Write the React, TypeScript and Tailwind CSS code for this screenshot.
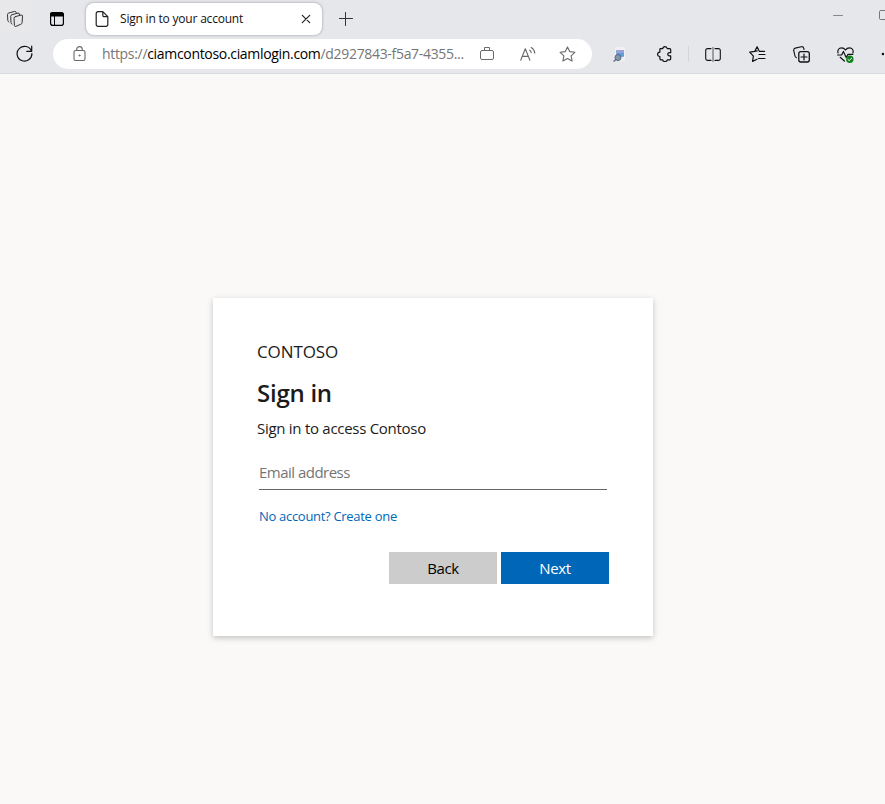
import React from "react";

type IconProps = {
  w: number;
  h: number;
  className?: string;
  children: React.ReactNode;
};

function Icon({ w, h, className = "", children }: IconProps) {
  return (
    <svg
      width={w}
      height={h}
      viewBox={`0 0 ${w} ${h}`}
      fill="none"
      stroke="currentColor"
      strokeLinecap="round"
      strokeLinejoin="round"
      className={`shrink-0 ${className}`}
    >
      {children}
    </svg>
  );
}

function TabStrip() {
  return (
    <div className="flex h-[38px] items-start">
      <div className="flex h-[33px] w-[33px] shrink-0 bg-[#e8e8ea] pl-[6px] pt-[10px] text-[#333]">
        <Icon w={18} h={18}>
          <path d="M9.4 6.6 15.2 5.1Q16.6 4.8 16.5 6.1L16.1 12.7Q16 13.9 14.8 14.3L9.8 16.4Q8.6 16.7 8.4 15.4L8 8.1Q8 6.9 9.4 6.6Z" />
          <path d="M13.4 4.8V4Q13.3 2.9 12 3.1L6 4.7Q4.7 5 4.7 6.3L5 12.6Q5.1 13.8 6 14.1" />
          <path d="M10.1 2.8V2.4Q9.9 1.1 8.6 1.4L2.8 3Q1.5 3.3 1.5 4.6L1.8 10.4Q1.9 11.6 2.8 12" />
        </Icon>
      </div>
      <Icon w={14} h={14} className="ml-[17px] mt-3 text-black">
        <rect x="0.6" y="0.6" width="12.8" height="12.8" rx="2.2" strokeWidth="1.2" />
        <path d="M1 1h12v3H1z" fill="currentColor" />
        <path d="M4.5 4v9" />
      </Icon>
      <div className="ml-[22px] mt-[3px] flex h-8 w-[236px] shrink-0 items-center rounded-lg bg-white pl-[9px] shadow-[0_0_3px_rgba(0,0,0,0.35)]">
        <Icon w={14} h={16} className="text-[#222]">
          <path d="M3 .7h4.8l5 5v7.8a1.8 1.8 0 0 1-1.8 1.8H3a1.8 1.8 0 0 1-1.8-1.8v-11A1.8 1.8 0 0 1 3 .7ZM7.8.9v3.6a1.2 1.2 0 0 0 1.2 1.2h3.6" strokeWidth="1.2" />
        </Icon>
        <span className="ml-[11px] w-[180px] whitespace-nowrap text-[12px] leading-4 tracking-[-0.2px] text-[#111]">
          Sign in to your account
        </span>
        <Icon w={10} h={10} className="ml-px text-[#222]">
          <path d="m1.3 1.3 7.4 7.4M8.7 1.3 1.3 8.7" strokeWidth="1.2" />
        </Icon>
      </div>
      <Icon w={14} h={14} className="ml-[17px] mt-3 text-[#333]">
        <path d="M6.5.5v13M0 6.5h13.5" />
      </Icon>
      <Icon w={11} h={11} className="ml-[480px] mt-[10px] text-[#888]">
        <path d="M.5 5.5h9" />
      </Icon>
      <Icon w={10} h={10} className="ml-[35px] mt-[10px] text-[#777]">
        <rect x="0.5" y="0.5" width="9" height="9" rx="1" />
      </Icon>
    </div>
  );
}

function AddressBar() {
  return (
    <div className="ml-[20px] flex h-[30px] w-[539px] shrink-0 items-center rounded-full bg-white pl-[19.5px] text-[#6a6a6a]">
      <Icon w={13} h={15} className="-translate-y-px">
        <rect x="1" y="4.5" width="11" height="10" rx="1.5" strokeWidth="1.1" />
        <path d="M3.7 4.5V3.4a2.8 2.8 0 0 1 5.6 0v1.1" strokeWidth="1.1" />
        <circle cx="6.5" cy="9.5" r=".7" fill="currentColor" strokeWidth=".5" />
      </Icon>
      <span className="ml-[16.5px] w-[378px] whitespace-nowrap text-[14px] leading-5 tracking-[-0.32px] text-[#767676]">
        https://<span className="text-black">ciamcontoso.ciamlogin.com</span>/d2927843-f5a7-4355...
      </span>
      <Icon w={14} h={13} className="-translate-y-px">
        <rect x="0.5" y="3.5" width="13" height="9" rx="1.5" />
        <path d="M4.5 3.5V.5h5v3" />
      </Icon>
      <Icon w={16} h={14} className="ml-[26px]">
        <path d="m.7 13.3 4.6-11.6 4.6 11.6M2.3 9.4h6" strokeWidth="1.1" />
        <path d="M9.7 3.2q1.4.9 1.6 2.6M11.2.6q3.2 1.6 3.6 5.6" strokeWidth="1.1" />
      </Icon>
      <Icon w={17} h={16} className="ml-[22.5px]">
        <path d="m8.5 .9 2.2 4.7 5.2.7-3.8 3.5 1 5.2-4.6-2.5-4.6 2.5 1-5.2L1.1 6.3l5.2-.7Z" strokeWidth="1.1" />
      </Icon>
    </div>
  );
}

function Toolbar() {
  return (
    <div className="flex h-9 items-start border-b border-[#d9dcdd] pt-px text-[#111]">
      <Icon w={17} h={17} className="ml-4 mt-[6px]">
        <path d="M15.5 6.3A7.4 7.4 0 1 0 15.9 8.5M15.7 1.2v5.1h-5" strokeWidth="1.2" />
      </Icon>
      <AddressBar />
      <svg width="13" height="16" viewBox="0 0 13 16" className="ml-[21px] mt-2 shrink-0">
        <path d="M2 0h8l2 2v12H2z" fill="#f2f0f2" />
        <path d="M3 3h8v7H3z" fill="#8ba7dc" />
        <path d="M5 3h6v3H5z" fill="#9aa0d6" />
        <path d="M4 6h7v3H4z" fill="#5c9fdc" />
        <circle cx="5" cy="10.5" r="3" fill="#8496aa" stroke="#526980" />
        <path d="m3 12.5-2.5 2" stroke="#526980" strokeWidth="1.5" />
      </svg>
      <Icon w={15} h={16} className="ml-[30.5px] mt-[7px]">
        <path
          d="M3.2 2.7h2.5C5.9 1.1 6.7.6 8 .6s2.1.5 2.3 2.1h2.4a1 1 0 0 1 1 1v3C12 6.4 10.8 7 10.8 8.3S12 10 13.7 9.8v3a1 1 0 0 1-1 1h-2.4c-.2 1.2-1 1.7-2.3 1.7s-2.1-.5-2.3-1.7H3.9a1 1 0 0 1-1-1v-2.3C1.4 10.5.6 9.7.6 8.3s.8-2.1 2.3-2.2V3Z"
          strokeWidth="1.2"
        />
      </Icon>
      <div className="ml-[16.5px] mt-[7px] h-4 w-px shrink-0 bg-[#d3d5d8]" />
      <Icon w={16} h={15} className="ml-4 mt-2">
        <path d="M6 1.6H2.5A1.8 1.8 0 0 0 .7 3.4v8.2a1.8 1.8 0 0 0 1.8 1.8H6M10 1.6h3.5a1.8 1.8 0 0 1 1.8 1.8v8.2a1.8 1.8 0 0 1-1.8 1.8H10" strokeWidth="1.1" />
        <path d="M8 .5v14" stroke="#555" />
      </Icon>
      <Icon w={17} h={17} className="ml-[27.5px] mt-[7px]">
        <path d="M8.2 4.9 5.8 5.3.7 6.2l3.7 4-.9 5.2 4.5-2.2M5.8 5.3 8.1.7l2.2 4.6h5.3M10 8.5h6M9.5 12.5h6.5" strokeWidth="1.2" />
      </Icon>
      <Icon w={17} h={17} className="ml-[27px] mt-[7px]">
        <path d="M3.5 11.7Q2.3 11.3 2 10L.7 4.5Q.5 2.6 2.2 2.1L8.3.7q2-.3 2.3 1.3l.5 1.5" strokeWidth="1.1" />
        <rect x="5.8" y="5.7" width="10.5" height="10.3" rx="2" strokeWidth="1.3" />
        <path d="M11 8v6M8 11h6" strokeWidth="1.2" />
      </Icon>
      <Icon w={17} h={17} className="ml-[27px] mt-2">
        <path d="M1.1 6C.2 3 2 .8 4.5.8 6.5.8 7.6 1.7 8.5 3 9.4 1.7 10.5.8 12.5.8c2.5 0 4.3 2.2 3.4 5.2M.6 8h4l1.8-3.5 2.8 6L11 7.3h4.8M3.2 10.3l4.2 3.7" strokeWidth="1.2" />
        <circle cx="12.8" cy="12.3" r="3.7" fill="#10801a" stroke="none" />
        <path d="m11 12.5 1.2 1.1 2.4-2.4" stroke="#fff" />
      </Icon>
      <svg width="3" height="4" viewBox="0 0 3 4" className="ml-[27.5px] mt-[13px] shrink-0">
        <circle cx="2" cy="2" r="1.3" fill="#111" />
      </svg>
    </div>
  );
}

function SignInCard() {
  return (
    <main className="ml-[213px] mt-[224px] h-[338px] w-[440px] bg-white px-11 pt-11 text-[#1b1b1b] shadow-[0_2px_6px_rgba(0,0,0,0.22)]">
      <div className="h-5 whitespace-nowrap text-[17px] leading-5 tracking-[-0.1px]">CONTOSO</div>
      <h1 className="mt-[15px] h-8 whitespace-nowrap text-[24px] font-semibold leading-8 tracking-[-0.25px]">Sign in</h1>
      <p className="mt-[9px] h-5 whitespace-nowrap text-[15px] leading-5 tracking-[-0.28px]">Sign in to access Contoso</p>
      <div className="ml-[2px] mt-[17px] h-[35px] w-[348px] border-b border-[#666]">
        <input
          type="email"
          placeholder="Email address"
          className="block h-[34px] w-full bg-transparent text-[15px] tracking-[-0.52px] outline-none placeholder:text-[#757575]"
        />
      </div>
      <a href="#" className="ml-[2px] mt-4 block h-5 whitespace-nowrap text-[13px] leading-5 tracking-[-0.3px] text-[#0067b8]">
        No account? Create one
      </a>
      <div className="ml-[132px] mt-[26px] flex gap-1">
        <button className="h-8 w-[108px] bg-[#ccc] text-[15px] tracking-[-0.4px] text-black">Back</button>
        <button className="h-8 w-[108px] bg-[#0067b8] text-[15px] tracking-[-0.4px] text-white">Next</button>
      </div>
    </main>
  );
}

export default function App() {
  return (
    <div className="h-[804px] w-[885px] overflow-hidden bg-[#faf9f8] font-['Open_Sans','Noto_Sans',sans-serif]">
      <header className="overflow-hidden bg-[#e6e7eb]">
        <TabStrip />
        <Toolbar />
      </header>
      <SignInCard />
    </div>
  );
}
